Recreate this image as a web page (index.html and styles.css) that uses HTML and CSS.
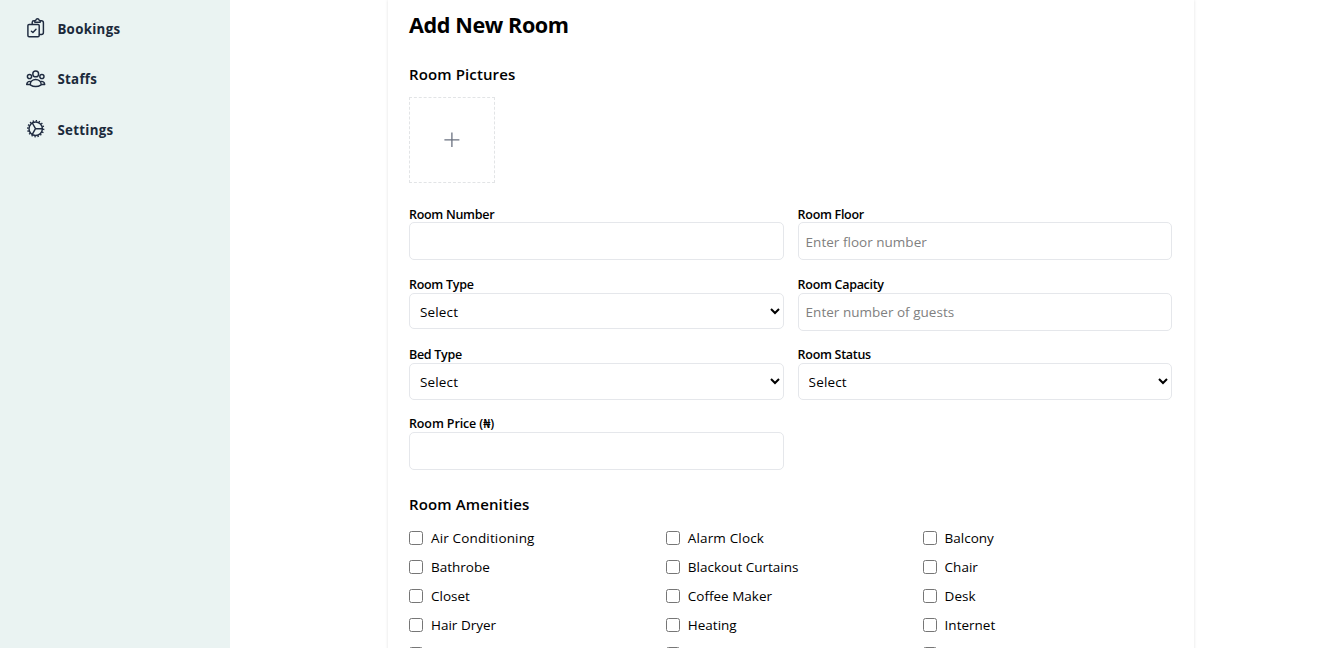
FILE: index.html
```html
<!DOCTYPE html>
<html lang="en">
<head>
<meta charset="utf-8">
<title>Add New Room</title>
<link rel="stylesheet" href="styles.css">
</head>
<body>
<div class="app">
  <nav class="sidebar">
    <a class="nav-item">
      <svg class="nav-icon" viewBox="0 0 20 20"><rect x="1.900" y="6.400" width="11.300" height="12.400" rx="1.200"/><path d="M6.200 6V4.500Q6.200 2.800 7.900 2.800H8.700M14.200 2.800H15.400Q17.400 2.800 17.400 4.800V14.500Q17.400 16.400 15.400 16.400H13.500M8.800 4.200V2.800Q9.400 2.500 9.900 2.200Q10.200 .8 11.500 .8Q12.800 .8 13.100 2.200Q13.700 2.500 14.200 2.800V4.200ZM5.400 13.200L6.900 14.500L10 11.200"/></svg>
      <span class="nav-text">Bookings</span>
    </a>
    <a class="nav-item">
      <svg class="nav-icon" viewBox="0 0 20 20"><circle cx="9.700" cy="4.900" r="2.900"/><circle cx="3.500" cy="7.500" r="2.100"/><circle cx="15.900" cy="7.500" r="2.100"/><path d="M4.200 15.800C4.200 8.700 15.200 8.700 15.200 15.800Q9.700 19.400 4.200 15.800ZM4.400 12.400Q1 12.200 .7 15.500H4M15 12.400Q18.400 12.200 18.700 15.500H15.400"/></svg>
      <span class="nav-text">Staffs</span>
    </a>
    <a class="nav-item">
      <svg class="nav-icon" viewBox="0 0 20 20"><circle cx="9.700" cy="9.700" r="6.700"/><circle class="teeth" cx="9.700" cy="9.700" r="7.900" pathLength="48"/><path d="M9.800 9.700H16.500M9.500 9.700L6.300 4M9.500 9.700L6.300 15.400"/></svg>
      <span class="nav-text">Settings</span>
    </a>
  </nav>
  <main class="content">
    <form class="card">
      <h1 class="title">Add New Room</h1>
      <h2 class="section pictures">Room Pictures</h2>
      <div class="upload"><svg viewBox="0 0 16 16" class="plus"><path d="M7.900 .5V15M.4 7.900H15.400"/></svg></div>
      <div class="fields">
        <div class="field"><label class="lowered">Room Number</label><input class="control" type="text"></div>
        <div class="field"><label class="lowered">Room Floor</label><input class="control" type="text" placeholder="Enter floor number"></div>
        <div class="field"><label>Room Type</label><select class="control select short"><option>Select</option></select></div>
        <div class="field"><label>Room Capacity</label><input class="control raised" type="text" placeholder="Enter number of guests"></div>
        <div class="field"><label>Bed Type</label><select class="control select"><option>Select</option></select></div>
        <div class="field"><label>Room Status</label><select class="control select"><option>Select</option></select></div>
        <div class="field"><label class="price">Room Price (₦)</label><input class="control" type="text"></div>
      </div>
      <h2 class="section amenities-title">Room Amenities</h2>
      <div class="amenities">
        <label class="check"><input type="checkbox"><span class="wide">Air Conditioning</span></label>
        <label class="check"><input type="checkbox"><span class="wide">Alarm Clock</span></label>
        <label class="check"><input type="checkbox"><span>Balcony</span></label>
        <label class="check"><input type="checkbox"><span>Bathrobe</span></label>
        <label class="check"><input type="checkbox"><span>Blackout Curtains</span></label>
        <label class="check"><input type="checkbox"><span>Chair</span></label>
        <label class="check"><input type="checkbox"><span>Closet</span></label>
        <label class="check"><input type="checkbox"><span>Coffee Maker</span></label>
        <label class="check"><input type="checkbox"><span>Desk</span></label>
        <label class="check"><input type="checkbox"><span>Hair Dryer</span></label>
        <label class="check"><input type="checkbox"><span>Heating</span></label>
        <label class="check"><input type="checkbox"><span>Internet</span></label>
        <label class="check"><input type="checkbox"></label>
        <label class="check"><input type="checkbox"></label>
        <label class="check"><input type="checkbox"></label>
      </div>
    </form>
  </main>
</div>
</body>
</html>
```
FILE: styles.css
```css
* { box-sizing: border-box; margin: 0; padding: 0; }
html, body { height: 100%; overflow: hidden; }
body { background: #fff; color: #000; font-family: "Segoe UI", "Open Sans", "Noto Sans", sans-serif; font-size: 13.5px; }
.app { display: flex; height: 648px; overflow: hidden; }
.sidebar { width: 230px; flex: none; background: #eaf3f2; padding: 3px 26px; }
.nav-item { display: flex; align-items: center; gap: 11.4px; height: 50.5px; color: #1b2a3b; font-weight: 700; font-size: 13.3px; letter-spacing: .3px; }
.nav-text { padding-top: 1px; }
.nav-icon { width: 20px; height: 20px; fill: none; stroke: #1f2b40; stroke-width: 1.45; stroke-linejoin: round; stroke-linecap: round; }
.nav-icon .teeth { stroke-width: 1.6; stroke-dasharray: 1.3 1.7; stroke-linecap: butt; }
.content { flex: 1; display: flex; padding-left: 158px; }
.card { width: 806px; height: 700px; flex: none; padding: 0 21.8px 0 21px; box-shadow: 0 0 3px rgba(0,0,0,.12); }
.title { height: 50px; line-height: 50px; font-size: 21.6px; font-weight: 700; letter-spacing: -.4px; }
.section { font-size: 15px; font-weight: 600; letter-spacing: .12px; }
.pictures { height: 47px; line-height: 48px; }
.upload { width: 86px; height: 86px; border: 1px dashed #e2e4e6; display: flex; align-items: center; justify-content: center; }
.plus { width: 16px; height: 16px; fill: none; stroke: #6b7280; stroke-width: 1.3; }
.fields { display: grid; grid-template-columns: 1fr 1fr; grid-template-rows: 71px 70px 69px 56px; column-gap: 14px; margin-top: 21px; }
.field { display: flex; flex-direction: column; }
.field label { height: 18px; line-height: 19px; font-size: 12.5px; font-weight: 600; letter-spacing: -.29px; white-space: nowrap; }
.field .lowered { line-height: 21px; }
.field .price { letter-spacing: -.12px; }
.control { width: 100%; height: 38px; border: 1px solid #e5e7eb; border-radius: 5px; background: #fff; color: #000; padding: 1px 7px 0; font: inherit; letter-spacing: .02px; }
.control::placeholder { color: #808080; opacity: 1; }
.raised { padding: 0 7px 1px; }
.select { height: 37px; padding: 1px 6px 0; letter-spacing: .15px; }
.short { height: 36px; }
.amenities-title { height: 53px; line-height: 69px; }
.amenities { display: grid; grid-template-columns: repeat(3, 1fr); grid-auto-rows: 29px; column-gap: 7.2px; }
.check { display: flex; align-items: center; gap: 8px; white-space: nowrap; }
.check .wide { letter-spacing: .15px; }
.check input { width: 14px; height: 14px; flex: none; }
```
